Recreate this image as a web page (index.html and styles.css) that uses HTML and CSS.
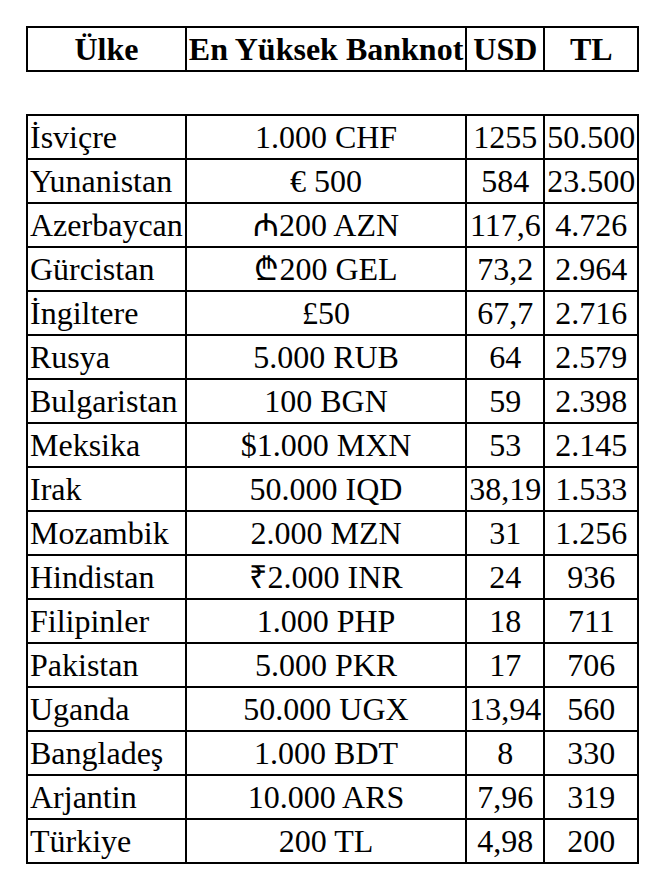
FILE: index.html
```html
<!DOCTYPE html>
<html>
<head>
<meta charset="utf-8">
<title>En Yüksek Banknotlar</title>
<link rel="stylesheet" href="styles.css">
</head>
<body>
<table class="notes">
  <tr class="head">
    <th>Ülke</th>
    <th>En Yüksek Banknot</th>
    <th>USD</th>
    <th>TL</th>
  </tr>
  <tr class="spacer">
    <td>&nbsp;</td><td></td><td></td><td></td>
  </tr>
  <tr><td class="country">İsviçre</td><td class="note">1.000 CHF</td><td class="num">1255</td><td class="num">50.500</td></tr>
  <tr><td class="country">Yunanistan</td><td class="note">€ 500</td><td class="num">584</td><td class="num">23.500</td></tr>
  <tr><td class="country">Azerbaycan</td><td class="note">₼200 AZN</td><td class="num">117,6</td><td class="num">4.726</td></tr>
  <tr><td class="country">Gürcistan</td><td class="note">₾200 GEL</td><td class="num">73,2</td><td class="num">2.964</td></tr>
  <tr><td class="country">İngiltere</td><td class="note">£50</td><td class="num">67,7</td><td class="num">2.716</td></tr>
  <tr><td class="country">Rusya</td><td class="note">5.000 RUB</td><td class="num">64</td><td class="num">2.579</td></tr>
  <tr><td class="country">Bulgaristan</td><td class="note">100 BGN</td><td class="num">59</td><td class="num">2.398</td></tr>
  <tr><td class="country">Meksika</td><td class="note">$1.000 MXN</td><td class="num">53</td><td class="num">2.145</td></tr>
  <tr><td class="country">Irak</td><td class="note">50.000 IQD</td><td class="num">38,19</td><td class="num">1.533</td></tr>
  <tr><td class="country">Mozambik</td><td class="note">2.000 MZN</td><td class="num">31</td><td class="num">1.256</td></tr>
  <tr><td class="country">Hindistan</td><td class="note">₹2.000 INR</td><td class="num">24</td><td class="num">936</td></tr>
  <tr><td class="country">Filipinler</td><td class="note">1.000 PHP</td><td class="num">18</td><td class="num">711</td></tr>
  <tr><td class="country">Pakistan</td><td class="note">5.000 PKR</td><td class="num">17</td><td class="num">706</td></tr>
  <tr><td class="country">Uganda</td><td class="note">50.000 UGX</td><td class="num">13,94</td><td class="num">560</td></tr>
  <tr><td class="country">Bangladeş</td><td class="note">1.000 BDT</td><td class="num">8</td><td class="num">330</td></tr>
  <tr><td class="country">Arjantin</td><td class="note">10.000 ARS</td><td class="num">7,96</td><td class="num">319</td></tr>
  <tr><td class="country">Türkiye</td><td class="note">200 TL</td><td class="num">4,98</td><td class="num">200</td></tr>
</table>
</body>
</html>
```

FILE: styles.css
```css
html, body {
  margin: 0;
  padding: 0;
  background: #ffffff;
}

body {
  padding: 26px 0 0 26px;
  color: #000000;
}

.notes {
  border-collapse: collapse;
  font-family: "Liberation Serif", "Times New Roman", serif;
  font-size: 32px;
  line-height: 40px;
}

.notes th,
.notes td {
  border: 2px solid #000000;
  padding: 1px 2px;
  white-space: nowrap;
}

.notes th {
  font-weight: bold;
  text-align: center;
}

.notes .spacer td {
  border-left-style: hidden;
  border-right-style: hidden;
}

.country {
  text-align: left;
}

.note,
.num {
  text-align: center;
}
```
